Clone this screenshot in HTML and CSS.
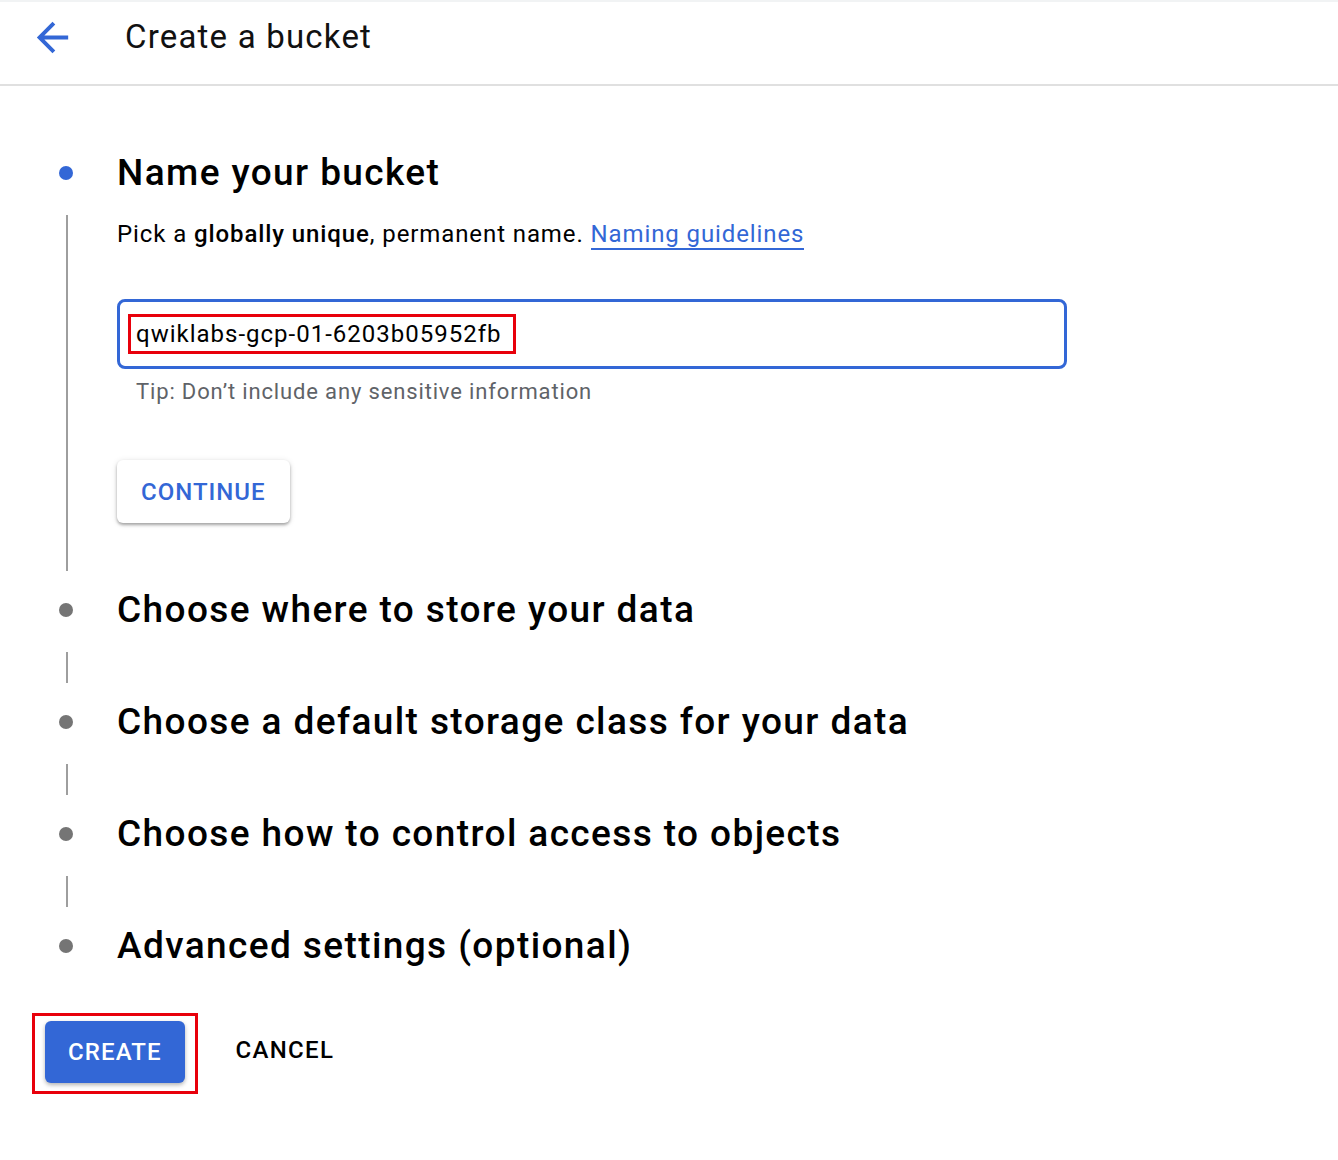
FILE: index.html
```html
<!DOCTYPE html>
<html lang="en">
<head>
  <meta charset="UTF-8">
  <meta name="viewport" content="width=device-width, initial-scale=1.0">
  <title>Create a bucket</title>
  <link rel="stylesheet" href="styles.css">
</head>
<body>
  <header class="topbar">
    <a class="back" href="#" aria-label="Back">
      <svg viewBox="0 0 24 24" width="47" height="47"><path d="M20 11H7.83l5.59-5.59L12 4l-8 8 8 8 1.41-1.41L7.83 13H20v-2z" fill="#3367d6"/></svg>
    </a>
    <h1>Create a bucket</h1>
  </header>

  <main class="stepper">
    <!-- Step 1 (open) -->
    <section class="step">
      <div class="rail"><span class="dot active"></span></div>
      <h2>Name your bucket</h2>
      <div class="rail"><span class="line"></span></div>
      <div class="step-body">
        <p class="desc">Pick a <b>globally unique</b>, permanent name. <a href="#">Naming guidelines</a></p>
        <div class="field"><span class="mark">qwiklabs-gcp-01-6203b05952fb</span></div>
        <p class="tip">Tip: Don’t include any sensitive information</p>
        <button class="btn-raised" type="button">Continue</button>
      </div>
    </section>

    <section class="step">
      <div class="rail"><span class="dot"></span></div>
      <h2>Choose where to store your data</h2>
      <div class="rail"><span class="line"></span></div>
      <div></div>
    </section>

    <section class="step">
      <div class="rail"><span class="dot"></span></div>
      <h2>Choose a default storage class for your data</h2>
      <div class="rail"><span class="line"></span></div>
      <div></div>
    </section>

    <section class="step">
      <div class="rail"><span class="dot"></span></div>
      <h2>Choose how to control access to objects</h2>
      <div class="rail"><span class="line"></span></div>
      <div></div>
    </section>

    <section class="step last">
      <div class="rail"><span class="dot"></span></div>
      <h2>Advanced settings (optional)</h2>
    </section>
  </main>

  <div class="actions">
    <div class="mark-box">
      <button class="btn-primary" type="button">Create</button>
    </div>
    <button class="btn-flat" type="button">Cancel</button>
  </div>
</body>
</html>
```

FILE: styles.css
```css
body {
  margin: 0;
  font-family: Roboto, "Noto Sans", Arial, sans-serif;
  color: #000;
  background: #fff;
}

.topbar {
  display: flex;
  align-items: center;
  box-sizing: border-box;
  height: 86px;
  padding-bottom: 14px;
  border-top: 2px solid #f1f3f4;
  border-bottom: 2px solid #e0e0e0;
}

.back {
  display: flex;
  margin-left: 29px;
  margin-top: 2px;
}

.topbar h1 {
  margin: 0 0 0 49px;
  font-size: 33px;
  font-weight: 400;
  letter-spacing: 1.2px;
  color: #111;
}

.stepper {
  margin-top: 65px;
}

.step {
  display: grid;
  grid-template-columns: 117px 1fr;
}

.rail {
  display: flex;
  padding-left: 59px;
}

.step > .rail:first-child {
  align-items: center;
}

.dot {
  width: 14px;
  height: 14px;
  border-radius: 50%;
  background: #757575;
}

.dot.active {
  background: #3367d6;
}

.line {
  width: 2px;
  margin: 20px 0 17px 7px;
  background: #9e9e9e;
  min-height: 31px;
}

.step h2 {
  margin: 0;
  font-size: 37px;
  line-height: 44px;
  font-weight: 500;
  letter-spacing: 1.4px;
  color: #000;
}

.step-body {
  padding: 23px 0 65px;
}

.desc {
  margin: 0;
  font-size: 24px;
  line-height: 32px;
  letter-spacing: 0.9px;
}

.desc b {
  font-weight: 500;
}

.desc a {
  color: #3367d6;
  text-decoration: none;
  border-bottom: 2px solid #3367d6;
}

.field {
  display: flex;
  align-items: center;
  box-sizing: border-box;
  width: 950px;
  height: 70px;
  margin-top: 49px;
  border: 3px solid #3367d6;
  border-radius: 8px;
  font-size: 24px;
  letter-spacing: 1px;
}

.mark {
  margin-left: 8px;
  padding: 2px 11px 2px 5px;
  border: 3px solid #e8000b;
  line-height: 30px;
}

.tip {
  margin: 9px 0 0 19px;
  font-size: 22px;
  line-height: 28px;
  letter-spacing: 0.85px;
  color: #5f6368;
}

.btn-raised {
  margin-top: 54px;
  height: 63px;
  padding: 0 24px;
  border: none;
  border-radius: 6px;
  background: #fff;
  color: #3367d6;
  font-family: inherit;
  font-size: 24px;
  font-weight: 500;
  letter-spacing: 1px;
  text-transform: uppercase;
  box-shadow: 0 2px 3px rgba(0, 0, 0, 0.3), 0 1px 6px rgba(0, 0, 0, 0.12);
  cursor: pointer;
}

.actions {
  display: flex;
  align-items: flex-start;
  margin: 45px 0 0 32px;
}

.mark-box {
  padding: 5px 10px 8px;
  border: 3px solid #e8000b;
}

.btn-primary {
  display: block;
  height: 62px;
  padding: 0 23px;
  border: none;
  border-radius: 6px;
  background: #3367d6;
  color: #fff;
  font-family: inherit;
  font-size: 24px;
  font-weight: 500;
  letter-spacing: 1.1px;
  text-transform: uppercase;
  box-shadow: 0 2px 4px rgba(0, 0, 0, 0.3);
  cursor: pointer;
}

.btn-flat {
  margin: 6px 0 0 14px;
  height: 62px;
  padding: 0 24px;
  border: none;
  background: none;
  color: #000;
  font-family: inherit;
  font-size: 24px;
  font-weight: 500;
  letter-spacing: 1.3px;
  text-transform: uppercase;
  cursor: pointer;
}
```
